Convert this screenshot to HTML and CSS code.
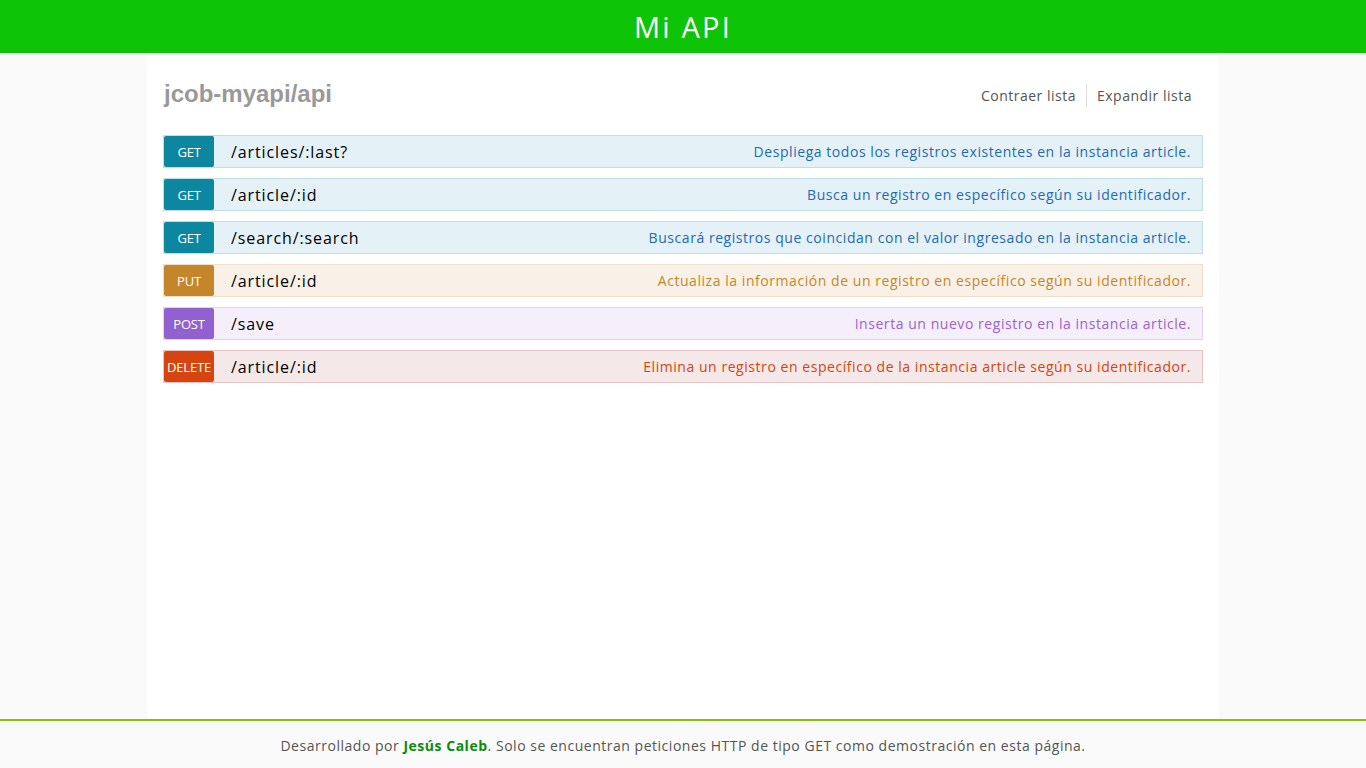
FILE: index.html
```html
<!DOCTYPE html>
<html lang="es">
<head>
<meta charset="utf-8">
<title>Mi API</title>
<link rel="stylesheet" href="styles.css">
</head>
<body>
<header class="topbar">
  <h1 class="brand">Mi API</h1>
</header>
<main class="container">
  <div class="heading">
    <h2 class="title">jcob-myapi/api</h2>
    <ul class="options">
      <li><a href="#">Contraer lista</a></li>
      <li><a href="#">Expandir lista</a></li>
    </ul>
  </div>
  <ul class="endpoints">
    <li class="op get"><span class="method">GET</span><span class="path">/articles/:last?</span><span class="desc">Despliega todos los registros existentes en la instancia article.</span></li>
    <li class="op get"><span class="method">GET</span><span class="path">/article/:id</span><span class="desc">Busca un registro en específico según su identificador.</span></li>
    <li class="op get"><span class="method">GET</span><span class="path">/search/:search</span><span class="desc">Buscará registros que coincidan con el valor ingresado en la instancia article.</span></li>
    <li class="op put"><span class="method">PUT</span><span class="path">/article/:id</span><span class="desc">Actualiza la información de un registro en específico según su identificador.</span></li>
    <li class="op post"><span class="method">POST</span><span class="path">/save</span><span class="desc">Inserta un nuevo registro en la instancia article.</span></li>
    <li class="op delete"><span class="method">DELETE</span><span class="path">/article/:id</span><span class="desc">Elimina un registro en específico de la instancia article según su identificador.</span></li>
  </ul>
</main>
<footer class="footer">
  <p>Desarrollado por <a href="#" class="author">Jesús Caleb</a>. Solo se encuentran peticiones HTTP de tipo GET como demostración en esta página.</p>
</footer>
</body>
</html>
```
FILE: styles.css
```css
* { box-sizing: border-box; }
html, body { height: 100%; }
body {
  margin: 0;
  background: #fafafa;
  font-family: "Open Sans", "DejaVu Sans", sans-serif;
  display: flex;
  flex-direction: column;
  min-height: 768px;
}
.topbar {
  background: #0dc406;
  height: 53px;
  display: flex;
  align-items: center;
  justify-content: center;
  flex: none;
}
.brand {
  margin: 0;
  color: #fff;
  font-family: "Open Sans", sans-serif;
  font-weight: 400;
  font-size: 29px;
  letter-spacing: 2.2px;
  line-height: 1;
}
.container {
  flex: 1;
  width: 1072px;
  margin: 0 auto;
  background: #fff;
  padding: 29px 16px 0 16px;
}
.heading {
  display: flex;
  align-items: center;
  justify-content: space-between;
  height: 26px;
  margin-bottom: 27px;
}
.title {
  margin: 0;
  font-family: "Liberation Sans", Arial, sans-serif;
  font-weight: 700;
  font-size: 24px;
  color: #999;
  padding-left: 1px;
  letter-spacing: 0;
  position: relative;
  top: -1px;
}
.options {
  list-style: none;
  margin: 0;
  padding: 0 11px 0 0;
  display: flex;
  align-items: center;
  height: 22px;
}
.options li {
  padding: 0 10px;
  line-height: 22px;
}
.options li + li { border-left: 1px solid #ddd; }
.options li:last-child { padding-right: 0; }
.options a {
  color: #555;
  text-decoration: none;
  font-size: 14px;
  letter-spacing: 0.5px;
}
.endpoints {
  list-style: none;
  margin: 0;
  padding: 0;
  display: flex;
  flex-direction: column;
  gap: 10px;
}
.op {
  display: flex;
  align-items: center;
  height: 33px;
  border: 1px solid;
  padding-right: 11px;
}
.method {
  flex: none;
  width: 50px;
  height: 31px;
  border-radius: 2px;
  color: #fff;
  font-size: 13px;
  display: flex;
  align-items: center;
  justify-content: center;
  letter-spacing: -0.2px;
}
.path {
  margin-left: 17px;
  font-size: 16px;
  color: #000;
  letter-spacing: 0.9px;
}
.desc {
  margin-left: auto;
  font-size: 14px;
  letter-spacing: 0.55px;
}
.get { background: #e4f1f6; border-color: #bfdfe7; }
.get .method { background: #0d869f; }
.get .desc { color: #1f6ab4; }
.put { background: #f9f1e7; border-color: #f0dfc6; }
.put .method { background: #c5862b; }
.put .desc { color: #c5862b; }
.post { background: #f5effb; border-color: #e0d3f4; }
.post .method { background: #9162cf; }
.post .desc { color: #9b62d0; }
.delete { background: #f5e8e8; border-color: #e8c3c4; }
.delete .method { background: #d6450f; }
.delete .desc { color: #d6450f; }
.footer {
  flex: none;
  height: 49px;
  border-top: 2px solid #89bf04;
  background: #fafafa;
  display: flex;
  align-items: center;
  justify-content: center;
}
.footer p {
  margin: 0;
  font-size: 14px;
  color: #555;
  letter-spacing: 0.52px;
  padding-top: 1px;
}
.author {
  color: #0c8c0c;
  font-weight: 700;
  text-decoration: none;
}
```
